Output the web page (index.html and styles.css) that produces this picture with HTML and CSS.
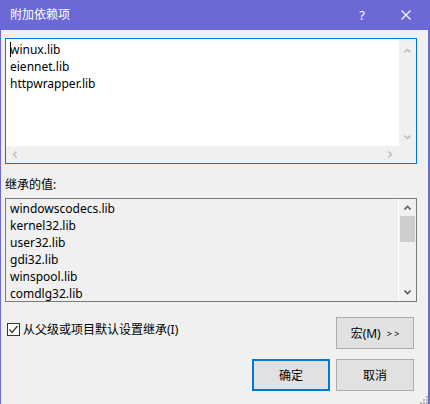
FILE: index.html
```html
<!DOCTYPE html>
<html lang="zh-CN">
<head>
  <meta charset="UTF-8">
  <title>附加依赖项</title>
  <link rel="stylesheet" href="styles.css">
</head>
<body>
  <div class="dialog">
    <div class="titlebar">
      <span class="title">附加依赖项</span>
      <span class="help">?</span>
      <span class="close">
        <svg width="10" height="10" viewBox="0 0 10 10"><path d="M0.5 0.5L9.5 9.5M9.5 0.5L0.5 9.5" stroke="#fff" stroke-width="1.1" fill="none"/></svg>
      </span>
    </div>

    <div class="content">
      <div class="editbox">
        <div class="edit-text">
          <span class="caret"></span>
          <div>winux.lib</div>
          <div>eiennet.lib</div>
          <div>httpwrapper.lib</div>
        </div>
        <div class="vscroll off">
          <span class="arrow arrow-up">
            <svg width="7" height="5" viewBox="0 0 7 5"><path d="M0.5 4.5L3.5 1.5L6.5 4.5" fill="none" stroke="currentColor" stroke-width="1.6"/></svg>
          </span>
          <span class="arrow">
            <svg width="7" height="5" viewBox="0 0 7 5"><path d="M0.5 0.5L3.5 3.5L6.5 0.5" fill="none" stroke="currentColor" stroke-width="1.6"/></svg>
          </span>
        </div>
        <div class="hscroll off">
          <span class="arrow">
            <svg width="5" height="7" viewBox="0 0 5 7"><path d="M4.5 0.5L1.5 3.5L4.5 6.5" fill="none" stroke="currentColor" stroke-width="1.6"/></svg>
          </span>
          <span class="arrow">
            <svg width="5" height="7" viewBox="0 0 5 7"><path d="M0.5 0.5L3.5 3.5L0.5 6.5" fill="none" stroke="currentColor" stroke-width="1.6"/></svg>
          </span>
        </div>
        <div class="corner"></div>
      </div>

      <div class="label">继承的值:</div>

      <div class="listbox">
        <div class="list-items">
          <div>windowscodecs.lib</div>
          <div>kernel32.lib</div>
          <div>user32.lib</div>
          <div>gdi32.lib</div>
          <div>winspool.lib</div>
          <div>comdlg32.lib</div>
        </div>
        <div class="list-scroll">
          <span class="arrow">
            <svg width="7" height="5" viewBox="0 0 7 5"><path d="M0.5 4.5L3.5 1.5L6.5 4.5" fill="none" stroke="currentColor" stroke-width="1.6"/></svg>
          </span>
          <span class="thumb"></span>
          <span class="track"></span>
          <span class="arrow">
            <svg width="7" height="5" viewBox="0 0 7 5"><path d="M0.5 0.5L3.5 3.5L6.5 0.5" fill="none" stroke="currentColor" stroke-width="1.6"/></svg>
          </span>
        </div>
      </div>

      <div class="footer">
        <label class="check">
          <span class="box">
            <svg width="11" height="11" viewBox="0 0 11 11"><path d="M1.5 5.5L4 8.5L9.5 2" fill="none" stroke="#333" stroke-width="1.2"/></svg>
          </span>
          从父级或项目默认设置继承(I)
        </label>
        <button class="btn macro">宏(M) <span class="chev">&gt; &gt;</span></button>
        <button class="btn ok">确定</button>
        <button class="btn cancel">取消</button>
      </div>
    </div>

    <svg class="grip" width="9" height="9" viewBox="0 0 9 9">
      <rect x="7" y="1" width="2" height="2" fill="#b4b4b4"/>
      <rect x="4" y="4" width="2" height="2" fill="#b4b4b4"/>
      <rect x="7" y="4" width="2" height="2" fill="#b4b4b4"/>
      <rect x="1" y="7" width="2" height="2" fill="#b4b4b4"/>
      <rect x="4" y="7" width="2" height="2" fill="#b4b4b4"/>
      <rect x="7" y="7" width="2" height="2" fill="#b4b4b4"/>
    </svg>
  </div>
</body>
</html>
```

FILE: styles.css
```css
* { box-sizing: border-box; }
body { margin: 0; font-family: "Noto Sans", "Noto Sans CJK SC", sans-serif; font-size: 12px; color: #000; background: #f0f0f0; }

.dialog { position: relative; width: 430px; height: 404px; background: #f0f0f0; border-left: 1px solid #6b69d6; border-right: 2px solid #6b69d6; overflow: hidden; }

.titlebar { height: 30px; background: #6b69d6; color: #fff; display: flex; align-items: center; }
.title { flex: 1; padding-left: 9px; line-height: 30px; }
.help, .close { width: 44px; height: 30px; display: flex; align-items: center; justify-content: center; }
.help { font-size: 13px; }

.content { padding: 8px 11px 0 4px; }

.editbox { height: 126px; border: 1px solid #0078d7; background: #fff; display: grid; grid-template-columns: 1fr 17px; grid-template-rows: 1fr 17px; }
.edit-text { position: relative; padding: 2px 4px; line-height: 17px; }
.caret { position: absolute; left: 4px; top: 3px; width: 1px; height: 15px; background: #000; }

.arrow { width: 17px; height: 17px; display: flex; align-items: center; justify-content: center; }
.off { color: #c0c0c0; }
.vscroll { background: #f0f0f0; display: flex; flex-direction: column; justify-content: space-between; padding-top: 3px; }
.hscroll { background: #f0f0f0; display: flex; justify-content: space-between; }
.corner { background: #f0f0f0; }

.label { margin-top: 12px; line-height: 17px; }

.listbox { margin-top: 5px; height: 104px; border: 1px solid #7a7a7a; background: #f0f0f0; display: flex; }
.list-items { flex: 1; padding: 1px 4px; line-height: 17px; overflow: hidden; }
.list-scroll { width: 18px; border-left: 1px solid #fff; display: flex; flex-direction: column; color: #606060; }
.thumb { height: 26px; margin: 0 1px; background: #cdcdcd; }
.track { flex: 1; }

.footer { display: grid; grid-template-columns: 1fr 78px 78px; column-gap: 6px; row-gap: 10px; margin-top: 15px; padding-right: 3px; }
.check { grid-column: 1 / 3; align-self: start; margin: 4px 0 0 2px; display: flex; align-items: center; gap: 3px; line-height: 17px; color: #000; }
.box { width: 13px; height: 13px; border: 1px solid #333; background: #fff; display: flex; align-items: center; justify-content: center; }
.btn { height: 32px; padding: 0; background: #e1e1e1; border: 1px solid #adadad; font: inherit; color: #000; display: flex; align-items: center; justify-content: center; }
.macro { grid-column: 3; }
.chev { font-size: 9px; margin-left: 6px; }
.ok { grid-column: 2; border: 2px solid #0078d7; }
.cancel { grid-column: 3; }

.grip { position: absolute; right: 0; bottom: 0; }
```
